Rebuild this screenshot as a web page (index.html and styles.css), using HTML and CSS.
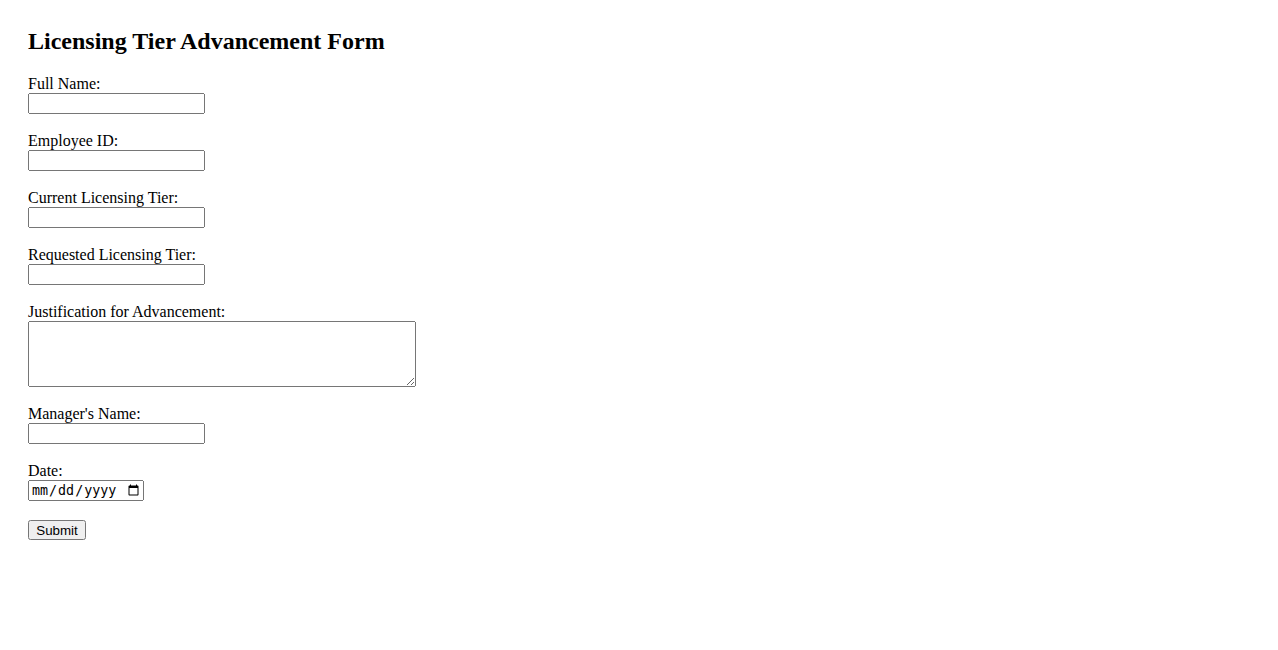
FILE: index.html
```html
<!DOCTYPE html>
<html>
<head>
<meta charset="utf-8">
<title>Licensing Tier Advancement Form</title>
<link rel="stylesheet" href="styles.css">
</head>
<body>
<div class="page">
  <h2 class="title">Licensing Tier Advancement Form</h2>
  <form class="form">
    <div class="field">
      <label class="label" for="name">Full Name:</label>
      <input class="text" type="text" id="name">
    </div>
    <div class="field">
      <label class="label" for="emp">Employee ID:</label>
      <input class="text" type="text" id="emp">
    </div>
    <div class="field">
      <label class="label" for="cur">Current Licensing Tier:</label>
      <input class="text" type="text" id="cur">
    </div>
    <div class="field">
      <label class="label" for="req">Requested Licensing Tier:</label>
      <input class="text" type="text" id="req">
    </div>
    <div class="field">
      <label class="label" for="just">Justification for Advancement:</label>
      <textarea class="area" id="just"></textarea>
    </div>
    <div class="field">
      <label class="label" for="mgr">Manager's Name:</label>
      <input class="text" type="text" id="mgr">
    </div>
    <div class="field">
      <label class="label" for="date">Date:</label>
      <input class="date" type="date" id="date">
    </div>
    <div class="field">
      <button class="submit" type="submit">Submit</button>
    </div>
  </form>
</div>
</body>
</html>
```

FILE: styles.css
```css
html, body {
  margin: 0;
  background: #fff;
}
body {
  font-family: "Liberation Serif", "Times New Roman", serif;
  font-size: 16px;
  color: #000;
}
.page {
  padding: 27px 28px;
}
.title {
  margin: 0 0 20px 0;
  font-size: 24px;
  font-weight: bold;
  line-height: 28px;
}
.form {
  display: flex;
  flex-direction: column;
}
.field {
  display: flex;
  flex-direction: column;
  align-items: flex-start;
  margin-bottom: 18px;
}
.label {
  line-height: 18px;
  height: 18px;
}
.text {
  box-sizing: border-box;
  width: 177px;
  height: 21px;
  margin: 0;
}
.area {
  box-sizing: border-box;
  width: 388px;
  height: 66px;
  margin: 0;
}
.date {
  box-sizing: border-box;
  width: 116px;
  height: 21px;
  margin: 0;
}
.submit {
  box-sizing: border-box;
  width: 58px;
  height: 20px;
  margin: 1px 0 0 0;
  font-family: "Liberation Sans", Arial, sans-serif;
  font-size: 13.33px;
  padding: 1px 6px;
}
```
